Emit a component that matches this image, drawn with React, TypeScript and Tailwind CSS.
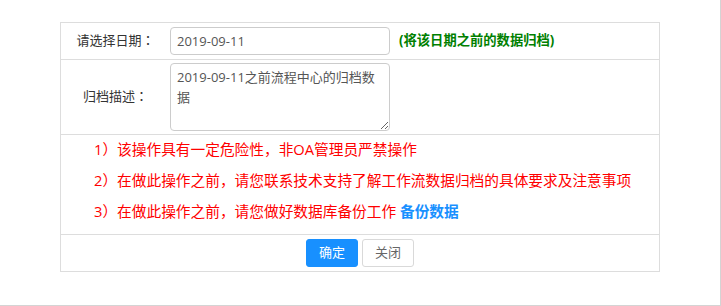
export default function App() {
  const font = "font-['Open_Sans','Noto_Sans_CJK_SC',sans-serif]";
  return (
    <div className={`w-[721px] h-[306px] bg-white border-r border-b border-[#d4d4d4] ${font}`}>
      <div className="pt-[22px]">
        <div className="w-[600px] mx-auto border border-[#dddddd] text-[13px] text-[#333]">
          {/* Date row */}
          <div className="flex items-center h-[36px]">
            <div className="w-[109px] text-center font-['Open_Sans','Noto_Sans_CJK_JP',sans-serif]">请选择日期：</div>
            <input
              type="text"
              readOnly
              value="2019-09-11"
              className="w-[220px] h-[28px] border border-[#cccccc] rounded-[4px] px-[6px] text-[13px] text-[#555] outline-none"
            />
            <span className="ml-[9px] text-[13.3px] font-bold text-[#008000]">(将该日期之前的数据归档)</span>
          </div>

          {/* Description row */}
          <div className="flex items-center h-[75px] border-t border-[#dddddd]">
            <div className="w-[109px] text-center font-['Open_Sans','Noto_Sans_CJK_JP',sans-serif]">归档描述：</div>
            <textarea
              readOnly
              value="2019-09-11之前流程中心的归档数据"
              className="w-[220px] h-[68px] border border-[#cccccc] rounded-[4px] pl-[6px] pr-[4px] py-[3px] leading-[20px] text-[13px] text-[#555] outline-none"
            />
          </div>

          {/* Warnings */}
          <div className="border-t border-[#dddddd] pt-[3px] pb-[3px] pl-[33px] text-[14.7px] leading-[22px] text-[#ff0000]">
            <p className="mb-[9px]">1）该操作具有一定危险性，非OA管理员严禁操作</p>
            <p className="mb-[9px]">2）在做此操作之前，请您联系技术支持了解工作流数据归档的具体要求及注意事项</p>
            <p className="mb-[9px]">
              3）在做此操作之前，请您做好数据库备份工作{" "}
              <a className="font-bold text-[#1890ff] cursor-pointer">备份数据</a>
            </p>
          </div>

          {/* Buttons */}
          <div className="flex items-center justify-center gap-[4px] h-[37px] border-t border-[#dddddd]">
            <button className="h-[28px] px-[12px] rounded-[3px] bg-[#1890ff] border border-[#1890ff] text-white text-[13px]">
              确定
            </button>
            <button className="h-[28px] px-[12px] rounded-[3px] bg-white border border-[#d9d9d9] text-[#666] text-[13px]">
              关闭
            </button>
          </div>
        </div>
      </div>
    </div>
  );
}
